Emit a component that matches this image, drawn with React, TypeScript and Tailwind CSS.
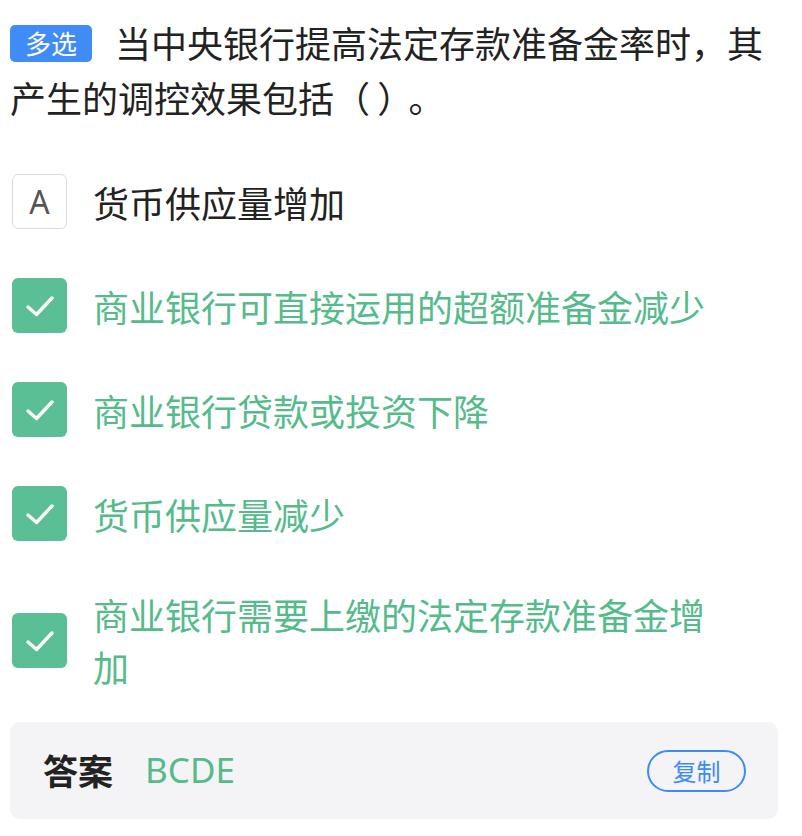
import React from "react";

const font = { fontFamily: '"Noto Sans CJK SC", "Noto Sans", sans-serif' };

function Check() {
  return (
    <div className="w-[55px] h-[55px] shrink-0 rounded-[6px] bg-[#5abf94] flex items-center justify-center">
      <svg width="55" height="55" viewBox="0 0 55 55">
        <polyline
          points="16,29 24.5,36.5 40,20"
          fill="none"
          stroke="#ffffff"
          strokeWidth="3.4"
          strokeLinecap="round"
          strokeLinejoin="round"
        />
      </svg>
    </div>
  );
}

export default function App() {
  const options = [
    "商业银行可直接运用的超额准备金减少",
    "商业银行贷款或投资下降",
    "货币供应量减少",
    "商业银行需要上缴的法定存款准备金增加",
  ];
  return (
    <div className="w-[802px] h-[836px] bg-white px-[10px] pt-[15px]" style={font}>
      <p className="text-[36px] leading-[55px] text-[#222222] w-[782px]">
        <span className="inline-flex items-center justify-center w-[82px] h-[37px] rounded-[5px] bg-[#3f8cf6] text-white text-[26px] leading-none mr-[23px] align-[4px]">
          多选
        </span>
        当中央银行提高法定存款准备金率时，其产生的调控效果包括（{"\u2009"}）{"\u2009"}
        <span className="ml-[-12px]">。</span>
      </p>

      <div className="flex items-center mt-[49px] ml-[2px]">
        <div className="w-[55px] h-[55px] shrink-0 rounded-[6px] border-[1.5px] border-[#dcdcdc] flex items-center justify-center text-[32px] text-[#555555]" style={{ fontFamily: '"Noto Sans", "Liberation Sans", sans-serif' }}>
          A
        </div>
        <div className="ml-[26px] text-[36px] leading-[52px] text-[#222222] w-[630px]">货币供应量增加</div>
      </div>

      {options.map((t, i) => (
        <div
          key={i}
          className={`flex items-center ml-[2px] ${i === 3 ? "mt-[47px]" : "mt-[49px]"}`}
        >
          <Check />
          <div className="ml-[26px] text-[36px] leading-[52px] text-[#55bb8b] w-[630px]">{t}</div>
        </div>
      ))}

      <div className="mt-[30px] w-[768px] h-[97px] rounded-[10px] bg-[#f4f4f6] flex items-center justify-between pl-[33px] pr-[32px]">
        <div className="flex items-center">
          <span className="text-[35px] font-bold text-[#222222]">答案</span>
          <span className="ml-[32px] text-[35px] text-[#55bb8b]" style={{ fontFamily: '"Noto Sans", "Liberation Sans", sans-serif' }}>
            BCDE
          </span>
        </div>
        <button className="w-[99px] h-[42px] rounded-full border-2 border-[#3d8bf5] text-[#3d8bf5] text-[24px] leading-none flex items-center justify-center">
          复制
        </button>
      </div>
    </div>
  );
}
